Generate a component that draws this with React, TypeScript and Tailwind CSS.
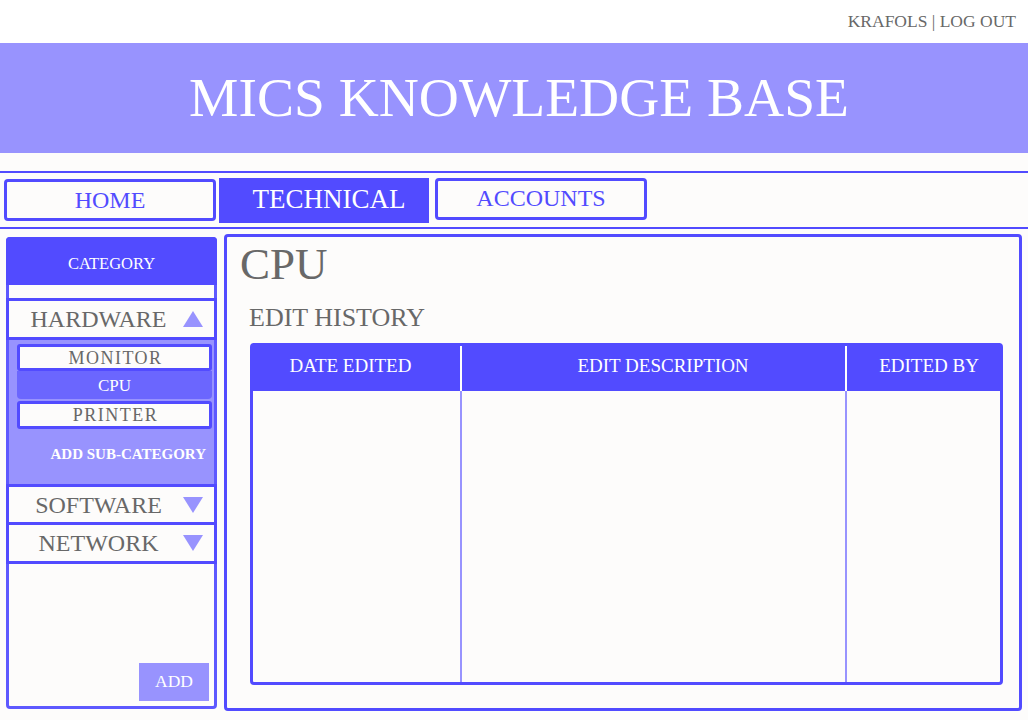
import React from 'react';

const Triangle = ({ up }: { up?: boolean }) => (
  <svg width="20" height="16" viewBox="0 0 20 16" className="shrink-0">
    <polygon points={up ? '10,0 20,16 0,16' : '0,0 20,0 10,16'} fill="#9893fe" />
  </svg>
);

const CategoryRow = ({ label, up, className }: { label: string; up?: boolean; className: string }) => (
  <div className={`-mx-[3px] flex items-center border-x-[3px] border-[#524bff] bg-[#fdfcfb] ${className}`}>
    <span className="flex-1 pl-[5px] text-center text-[24px] leading-none text-[#686868]">{label}</span>
    <div className="mr-[11px]">
      <Triangle up={up} />
    </div>
  </div>
);

const SubItem = ({ label }: { label: string }) => (
  <div className="flex h-full items-center justify-center rounded-[3px] border-[3px] border-[#524bff] bg-[#fdfcfb] pl-[2px] text-[18px] leading-none tracking-[1.5px] text-[#686868]">
    {label}
  </div>
);

export default function App() {
  return (
    <div className="h-[720px] w-[1028px] overflow-hidden bg-[#fdfcfb] font-['Liberation_Serif',serif]">
      {/* top bar */}
      <div className="flex h-[43px] items-center justify-end bg-white pr-[12px] text-[17.5px] leading-none text-[#686868]">
        KRAFOLS | LOG OUT
      </div>

      {/* banner */}
      <div className="flex h-[110px] items-center justify-center bg-[#9893fe] pl-[10px] text-[55.5px] leading-none text-white">
        MICS KNOWLEDGE BASE
      </div>

      {/* nav */}
      <div className="mt-[18px] flex h-[58px] items-start border-y-2 border-[#524bff]">
        <div className="ml-[4px] mt-[6px] flex h-[42px] w-[212px] items-center justify-center rounded-[4px] border-[3px] border-[#524bff] text-[24px] leading-none text-[#524bff]">
          HOME
        </div>
        <div className="ml-[3px] mt-[5px] flex h-[45px] w-[210px] items-center justify-center bg-[#524bff] pb-[2px] pl-[10px] text-[27px] leading-none text-white">
          TECHNICAL
        </div>
        <div className="ml-[6px] mt-[5px] flex h-[42px] w-[212px] items-center justify-center rounded-[4px] border-[3px] border-[#524bff] pb-[2px] text-[24px] leading-none text-[#524bff]">
          ACCOUNTS
        </div>
      </div>

      <div className="flex items-start">
        {/* sidebar */}
        <div className="ml-[6px] mt-[8px] flex h-[472px] w-[211px] flex-col rounded-[4px] border-[3px] border-[#5e59ff]">
          <div className="-mx-[3px] -mt-[3px] flex h-[48px] items-center justify-center rounded-t-[4px] bg-[#524bff] pt-[6px] text-[16.5px] leading-none text-white">
            CATEGORY
          </div>
          <div className="h-[13px]" />
          <CategoryRow label="HARDWARE" up className="h-[42px] border-y-[3px]" />
          <div className="flex h-[144px] flex-col bg-[#9893fe] pl-[8px] pr-[2px] pt-[4px]">
            <div className="h-[27px]">
              <SubItem label="MONITOR" />
            </div>
            <div className="flex h-[28px] items-center justify-center rounded-b-[4px] bg-[#6b66fe] text-[17px] leading-none text-white">
              CPU
            </div>
            <div className="mt-[2px] h-[28px]">
              <SubItem label="PRINTER" />
            </div>
            <div className="mt-[15px] flex h-[20px] items-center justify-end pr-[6px] text-[15px] font-bold leading-none text-white">
              ADD SUB-CATEGORY
            </div>
          </div>
          <CategoryRow label="SOFTWARE" className="h-[41px] border-y-[3px]" />
          <CategoryRow label="NETWORK" className="h-[39px] border-b-[3px]" />
          <div className="flex-1" />
          <div className="mb-[5px] mr-[5px] flex h-[38px] w-[70px] items-center justify-center self-end bg-[#9893fe] text-[17.5px] leading-none text-white">
            ADD
          </div>
        </div>

        {/* main panel */}
        <div className="ml-[7px] mt-[5px] flex h-[477px] w-[798px] flex-col rounded-[4px] border-[3px] border-[#524bff]">
          <div className="ml-[13px] mt-[5px] text-[45px] leading-none text-[#686868]">CPU</div>
          <div className="ml-[22px] mt-[18px] text-[26px] leading-none text-[#686868]">EDIT HISTORY</div>
          <div className="ml-[23px] mt-[12px] flex h-[342px] w-[753px] flex-col rounded-[4px] border-[3px] border-[#524bff]">
            <div className="-mt-[3px] flex h-[48px] bg-[#524bff] pt-[3px] text-[19px] leading-none text-white">
              <div className="flex w-[209px] items-center justify-center border-r-2 border-white pb-[7px] pr-[12px]">
                DATE EDITED
              </div>
              <div className="flex w-[385px] items-center justify-center border-r-2 border-white pb-[7px] pl-[19px]">
                EDIT DESCRIPTION
              </div>
              <div className="flex flex-1 items-center justify-center pb-[7px] pl-[11px]">EDITED BY</div>
            </div>
            <div className="flex flex-1">
              <div className="w-[209px] border-r-2 border-[#9893fe]" />
              <div className="w-[385px] border-r-2 border-[#9893fe]" />
              <div className="flex-1" />
            </div>
          </div>
        </div>
      </div>
    </div>
  );
}
